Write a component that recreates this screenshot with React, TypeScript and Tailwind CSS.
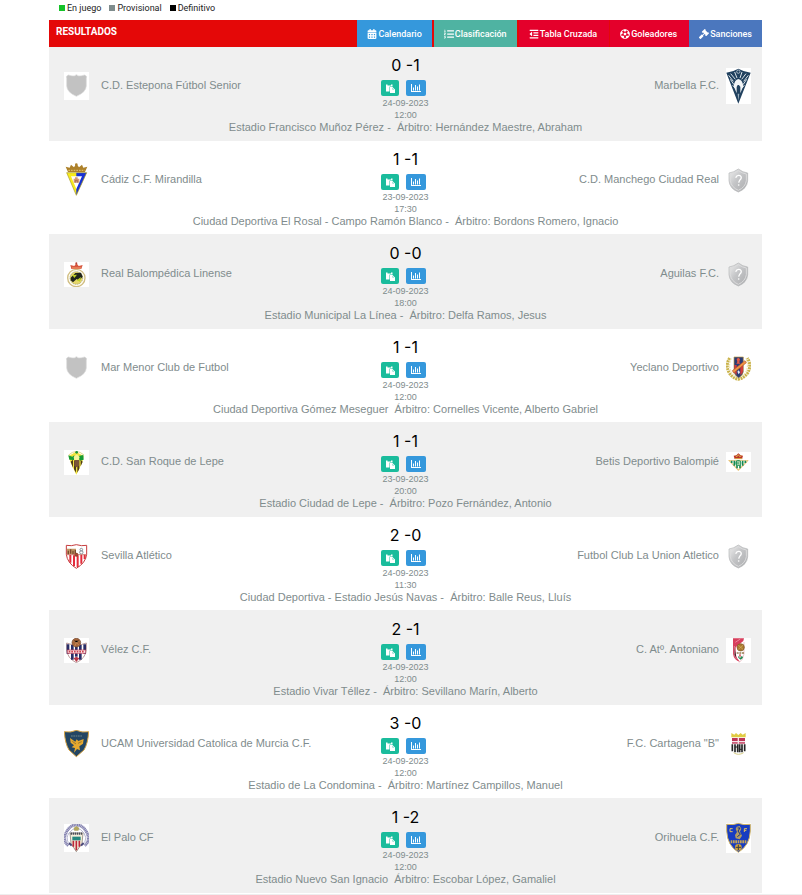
import type { ReactNode } from "react";
import { FaCalendarAlt, FaListOl, FaOutdent, FaFutbol, FaGavel } from "react-icons/fa";

/* Every crest is drawn on a 75-unit wide canvas and shown 25px wide. */
function Crest({ h, boxed, children }: { h: number; boxed?: boolean; children: ReactNode }) {
  return (
    <svg viewBox={`0 0 75 ${h}`} className={boxed ? "w-[25px] bg-white" : "w-[25px]"} aria-hidden="true">
      {children}
    </svg>
  );
}

const greyShield = "M37 8 Q43 14 53 11 L62 9 Q71 13 67 18 V42 Q66 61 37 73 Q9 61 8 42 V18 Q4 13 13 9 L22 11 Q32 14 37 8Z";

function PlainShield({ boxed }: { boxed?: boolean }) {
  return (
    <Crest h={84} boxed={boxed}>
      <path d={greyShield} fill="#c2c2c2" stroke="#dcdcdc" strokeWidth="2" />
    </Crest>
  );
}

function UnknownShield() {
  return (
    <Crest h={75}>
      <defs>
        <linearGradient id="silver" x1="0" y1="0" x2="1" y2="1">
          <stop offset="0" stopColor="#f0f0f0" />
          <stop offset=".45" stopColor="#c4c5c7" />
          <stop offset="1" stopColor="#aaabad" />
        </linearGradient>
      </defs>
      <path d="M37 3 Q50 13 65 15 V38 Q63 62 37 72 Q11 62 9 38 V15 Q24 13 37 3Z" fill="url(#silver)" stroke="#b4b5b7" strokeWidth="2" />
      <path d="M37 8 Q49 16 61 18 V38 Q58 58 37 67 Q16 58 13 38 V18 Q26 16 37 8Z" fill="none" stroke="#dcdcdd" strokeWidth="3" />
      <path d="M29 29 Q32 21 39 22 Q48 24 45 32 Q39 37 38 44" fill="none" stroke="#fff" strokeWidth="4" />
      <circle cx="38" cy="51" r="2.5" fill="#fff" />
    </Crest>
  );
}

function Marbella() {
  return (
    <Crest h={108} boxed>
      <path d="M1 14 Q20 12 37 2 Q55 12 74 14 L37 107Z" fill="#21415f" />
      <path d="M8 22 L22 40 M14 17 L28 34 M26 12 L33 30 M48 12 L42 30 M60 17 L47 34 M67 22 L53 40 M13 34 L24 50 M62 34 L51 50 M20 52 L29 62 M55 52 L46 62" stroke="#dbe4ea" strokeWidth="3" />
      <path d="M23 54 Q26 35 37 33 Q49 35 52 54 L43 76 V56 Q37 47 32 56 V76Z" fill="#f2f5f7" />
      <path d="M35 77 H40 L37 98Z" fill="#9bb0bf" />
      <circle cx="37" cy="11" r="5" fill="none" stroke="#dbe4ea" strokeWidth="2" />
      <path d="M37 51 V68" stroke="#21415f" strokeWidth="5" />
    </Crest>
  );
}

function Cadiz() {
  return (
    <Crest h={100}>
      <path d="M8 29 H68 L37 97Z" fill="#f8ec1c" />
      <path d="M37 29 H68 L37 97Z" fill="#1732d6" />
      <path d="M21 40 H54 L37 78Z" fill="#fff" />
      <path d="M29 59 V47 H33 V43 H41 V47 H46 V59Z" fill="#d59a73" />
      <path d="M34 59 V52 H40 V59" stroke="#8f5f48" strokeWidth="2" fill="none" />
      <path d="M8 29 H68 L37 97Z" fill="none" stroke="#a89832" strokeWidth="2" />
      <path d="M12 27 L5 11 L17 14 L21 5 L30 13 L37 2 L45 13 L54 5 L58 14 L70 11 L63 27Z" fill="#ad812a" />
      <path d="M13 22 H62" stroke="#e5ca70" strokeWidth="3" strokeDasharray="5 3" />
      <circle cx="37" cy="5" r="4" fill="#ad812a" />
    </Crest>
  );
}

function Linense() {
  return (
    <Crest h={75} boxed>
      <circle cx="37" cy="48" r="26" fill="#fffdf2" stroke="#d0bd82" strokeWidth="4" />
      <circle cx="37" cy="48" r="19" fill="#e6d76b" stroke="#8d8b67" strokeWidth="2" strokeDasharray="4 2" />
      <path d="M20 47 L34 33 L51 32 L56 44 L45 56 L38 51 L27 61 L20 55Z" fill="#20241c" />
      <path d="M25 39 L39 38 L31 48 M38 55 L51 45 L48 59" fill="#bdd023" />
      <path d="M22 21 L19 9 L31 12 L37 3 L44 12 L56 9 L52 21Z" fill="#d7573f" />
      <path d="M24 18 H51" stroke="#f3a06c" strokeWidth="3" />
      <circle cx="37" cy="4" r="3" fill="#b54437" />
    </Crest>
  );
}

function Yeclano() {
  return (
    <Crest h={75}>
      <path d="M11 6 Q-3 28 10 51 Q19 66 36 70 Q55 66 65 51 Q78 28 64 6" fill="none" stroke="#cab34b" strokeWidth="9" strokeDasharray="6 2" />
      <path d="M16 8 Q5 29 17 50 Q25 61 36 64 Q50 61 58 50 Q70 29 59 8" fill="none" stroke="#edde94" strokeWidth="3" strokeDasharray="5 3" />
      <path d="M24 3 H52 V47 Q51 57 38 66 Q25 57 24 47Z" fill="#2a3b76" stroke="#bd9a47" strokeWidth="2" />
      <path d="M25 27 H32 V57 Q26 52 25 46 M43 27 H51 V46 Q50 53 43 58Z" fill="#d53b39" />
      <path d="M32 9 L37 5 L42 9 L40 19 L43 23 H31 L34 18Z" fill="#e25945" />
      <path d="M19 44 L57 14 L61 20 L23 51Z" fill="#f19442" stroke="#ad5430" strokeWidth="2" />
      <path d="M34 47 L38 43 L42 49 L38 55Z" fill="#e6e9f0" />
    </Crest>
  );
}

function SanRoque() {
  return (
    <Crest h={75} boxed>
      <path d="M14 18 L36 5 L59 18 L55 37 L37 74 L20 38Z" fill="#f2e43e" />
      <path d="M14 15 Q36 -6 60 15" fill="none" stroke="#e8d98d" strokeWidth="3" />
      <path d="M13 16 L25 20 L31 16 L30 30 L16 29Z M43 18 L58 15 L59 29 L47 32Z" fill="#169b36" />
      <circle cx="38" cy="7" r="4" fill="#1a913a" />
      <path d="M20 35 L27 29 V53Z M30 32 H36 V68 L30 58Z M40 32 H46 V56 L40 68Z M50 30 L56 35 L50 49Z" fill="#4c3b1a" />
      <path d="M31 30 H45 V48 L38 52 L31 48Z" fill="#795538" />
      <path d="M29 21 L38 13 L47 21 L44 30 H31Z" fill="#f7f59b" />
    </Crest>
  );
}

function Betis() {
  return (
    <Crest h={60} boxed>
      <path d="M6 24 H68 L63 31 L37 57 L12 31Z" fill="#e9c47a" />
      <path d="M12 26 H63 L37 52Z" fill="#fff" />
      <path d="M17 26 V33 M25 26 V41 M50 26 V41 M58 26 V33 M33 39 V49 M42 39 V49" stroke="#178a52" strokeWidth="5" />
      <circle cx="37" cy="33" r="9" fill="#2d965d" />
      <path d="M33 29 H41 V38 H33 M33 33 H41" fill="none" stroke="#e8f2d2" strokeWidth="2" />
      <path d="M26 21 L23 11 L31 10 L37 4 L44 10 L51 11 L48 21Z" fill="#bd3028" />
      <path d="M26 20 H49 M28 11 L33 14 L37 8 L41 14 L47 11" fill="none" stroke="#d9b34e" strokeWidth="3" />
    </Crest>
  );
}

function Sevilla() {
  return (
    <Crest h={75}>
      <path d="M7 4 Q22 7 37 2 Q53 7 68 4 V31 Q65 57 37 73 Q10 57 7 31Z" fill="#fff" />
      <path d="M19 33 V56 M30 34 V66 M41 34 V69 M52 33 V59 M62 32 V45" stroke="#e42c3c" strokeWidth="6" />
      <path d="M9 14 H36 V31 H8Z" fill="#c19865" />
      <path d="M13 31 V20 M20 29 V16 M27 31 V20 M34 29 V18" stroke="#794931" strokeWidth="4" />
      <circle cx="52" cy="17" r="4" fill="none" stroke="#88919a" strokeWidth="3" />
      <circle cx="52" cy="25" r="5" fill="none" stroke="#88919a" strokeWidth="3" />
      <circle cx="37" cy="32" r="6" fill="#91452f" />
      <path d="M8 32 H67" stroke="#b94b3e" strokeWidth="2" />
      <path d="M7 4 Q22 7 37 2 Q53 7 68 4 V31 Q65 57 37 73 Q10 57 7 31Z" fill="none" stroke="#c63c3e" strokeWidth="3" />
    </Crest>
  );
}

function Velez() {
  return (
    <Crest h={75} boxed>
      <path d="M8 15 L24 20 H51 L67 15 V35 Q65 61 37 74 Q10 61 8 35Z" fill="#fff" stroke="#98696b" strokeWidth="2" />
      <path d="M12 19 V48 M25 21 V65 M49 21 V65 M62 19 V48" stroke="#292d67" strokeWidth="8" />
      <path d="M37 23 V56" stroke="#292d67" strokeWidth="8" />
      <path d="M10 36 H65 V46 H10Z" fill="#f7e8e8" stroke="#cf4053" strokeWidth="2" />
      <path d="M14 41 H61" stroke="#cf4053" strokeWidth="5" strokeDasharray="5 3" />
      <circle cx="37" cy="14" r="13" fill="#a7663b" stroke="#70452f" strokeWidth="2" />
      <path d="M27 8 L37 14 L48 8 M37 14 L32 25 M37 14 L46 22" stroke="#d59561" strokeWidth="2" />
      <path d="M29 61 L37 56 L46 61 L37 72Z" fill="#b93849" />
    </Crest>
  );
}

function Antoniano() {
  return (
    <Crest h={75} boxed>
      <path d="M21 1 H54 L52 9 L29 28 V49 Q31 61 42 72 Q24 67 21 48Z" fill="#d73f5c" />
      <path d="M28 13 L43 3 M25 24 L25 50 L31 63" stroke="#f3a8b6" strokeWidth="2" />
      <path d="M54 12 V48 Q52 66 39 74" fill="none" stroke="#dfaab4" strokeWidth="2" />
      <circle cx="44" cy="28" r="11" fill="#a97932" stroke="#805722" strokeWidth="2" />
      <path d="M37 22 L51 34 M51 22 L37 34" stroke="#d7b35c" strokeWidth="2" />
      <path d="M32 45 H55" stroke="#94794f" strokeWidth="5" strokeDasharray="6 2" />
      <path d="M36 53 L42 60 L48 53 L51 59 L44 65 L37 59Z" fill="#238852" />
      <path d="M42 49 V56" stroke="#c8353d" strokeWidth="4" />
    </Crest>
  );
}

function Ucam() {
  return (
    <Crest h={82}>
      <path d="M1 5 Q20 9 37 1 Q55 9 74 5 Q72 40 60 60 L37 80 L15 60 Q3 40 1 5Z" fill="#244663" stroke="#d6a344" strokeWidth="3" />
      <path d="M18 24 L34 35 L38 28 L43 33 L59 27 L57 41 L46 49 L48 61 L39 57 L30 68 L33 54 L23 52 L30 46 L20 38Z" fill="#e6a92f" />
      <path d="M21 18 H54" stroke="#56707c" strokeWidth="4" strokeDasharray="5 2" />
      <path d="M42 40 L53 35 M25 34 L36 42" stroke="#735f30" strokeWidth="2" />
    </Crest>
  );
}

function Cartagena() {
  return (
    <Crest h={75}>
      <path d="M16 16 V3 L25 8 L30 3 L37 9 L44 3 L50 8 L59 3 V16Z" fill="#e0cb43" />
      <path d="M18 18 H57 V35 H18Z" fill="#bd3557" />
      <path d="M37 18 V35 M18 29 H57" stroke="#f4e4e8" strokeWidth="4" />
      <path d="M17 37 H58 V54 L51 61 H24 L17 54Z" fill="#fff" />
      <path d="M19 37 V58 M27 37 V61 M35 37 V61 M41 37 V61 M48 37 V61 M56 37 V58" stroke="#252525" strokeWidth="5" />
      <path d="M27 45 H35 M41 52 H48" stroke="#252525" strokeWidth="3" />
      <path d="M23 62 Q37 72 53 62" fill="none" stroke="#d9cf87" strokeWidth="3" />
    </Crest>
  );
}

function ElPalo() {
  return (
    <Crest h={84} boxed>
      <path d="M13 65 Q-6 49 7 25 Q18 3 37 3 Q57 3 68 25 Q81 49 62 65" fill="none" stroke="#8583b0" strokeWidth="9" strokeDasharray="4 1" />
      <path d="M13 56 Q5 41 15 27 Q26 13 37 13 Q50 13 60 27 Q70 41 62 56" fill="none" stroke="#b6b6d0" strokeWidth="3" />
      <path d="M18 27 H57 L54 58 L37 83 L21 58Z" fill="#f4eedb" stroke="#746d60" strokeWidth="2" />
      <path d="M20 29 H55" stroke="#4a4b58" strokeWidth="7" strokeDasharray="4 2" />
      <path d="M25 38 H50 V49 H25Z" fill="#24877f" />
      <path d="M28 50 V68 M37 50 V79 M46 50 V68" stroke="#bd2739" strokeWidth="5" />
      <path d="M29 12 L37 6 L46 12 L43 20 H31Z" fill="#b2a760" />
      <path d="M15 57 L23 65 M59 57 L51 65" stroke="#4b497b" strokeWidth="6" />
    </Crest>
  );
}

function Orihuela() {
  return (
    <Crest h={90} boxed>
      <path d="M2 4 Q22 7 37 1 Q53 7 73 4 V24 Q71 68 37 88 Q4 68 2 24Z" fill="#173cc1" stroke="#d1b464" strokeWidth="3" />
      <path d="M20 17 H12 V26 H20 M55 27 V17 H63 M55 22 H61" fill="none" stroke="#e1bf62" strokeWidth="3" />
      <path d="M32 11 L41 9 L46 17 L42 26 L48 38 L41 49 L29 46 L27 36 L33 27 L29 18Z" fill="#b29c64" />
      <path d="M35 15 H42 L36 24 L43 34 L34 41" fill="none" stroke="#173081" strokeWidth="3" />
      <path d="M14 56 H61" stroke="#c6a557" strokeWidth="9" strokeDasharray="5 2" />
      <circle cx="37" cy="73" r="10" fill="#d0a33e" />
      <path d="M37 65 V81 M29 73 H45" stroke="#373b45" strokeWidth="3" />
    </Crest>
  );
}

/* Clipboard with a sheet laid over its lower right corner. */
function PasteIcon() {
  return (
    <svg viewBox="0 0 18 18" className="size-[9px]" fill="currentColor" aria-hidden="true">
      <path d="M0 1 H3 V3 H10 V1 H13 V5 H7 V15 H0Z" />
      <path fillRule="evenodd" d="M8 6 H13 L18 11 V18 H8Z M13 8 V11 H16Z" />
    </svg>
  );
}

/* Four bars standing in an L-shaped axis. */
function BarsIcon() {
  return (
    <svg viewBox="0 0 20 16" className="h-2 w-2.5" fill="currentColor" aria-hidden="true">
      <path d="M0 0 H2 V14 H20 V16 H0Z" />
      <path d="M4 7 H6 V13 H4Z M8 2 H10 V13 H8Z M12 5 H14 V13 H12Z M16 1 H18 V13 H16Z" />
    </svg>
  );
}

type Match = {
  home: string;
  homeCrest: ReactNode;
  away: string;
  awayCrest: ReactNode;
  score: [number, number];
  date: string;
  time: string;
  venue: string;
};

const matches: Match[] = [
  { home: "C.D. Estepona Fútbol Senior", homeCrest: <PlainShield boxed />, away: "Marbella F.C.", awayCrest: <Marbella />, score: [0, 1], date: "24-09-2023", time: "12:00", venue: "Estadio Francisco Muñoz Pérez - \u00a0Árbitro: Hernández Maestre, Abraham" },
  { home: "Cádiz C.F. Mirandilla", homeCrest: <Cadiz />, away: "C.D. Manchego Ciudad Real", awayCrest: <UnknownShield />, score: [1, 1], date: "23-09-2023", time: "17:30", venue: "Ciudad Deportiva El Rosal - Campo Ramón Blanco - \u00a0Árbitro: Bordons Romero, Ignacio" },
  { home: "Real Balompédica Linense", homeCrest: <Linense />, away: "Aguilas F.C.", awayCrest: <UnknownShield />, score: [0, 0], date: "24-09-2023", time: "18:00", venue: "Estadio Municipal La Línea - \u00a0Árbitro: Delfa Ramos, Jesus" },
  { home: "Mar Menor Club de Futbol", homeCrest: <PlainShield />, away: "Yeclano Deportivo", awayCrest: <Yeclano />, score: [1, 1], date: "24-09-2023", time: "12:00", venue: "Ciudad Deportiva Gómez Meseguer \u00a0Árbitro: Cornelles Vicente, Alberto Gabriel" },
  { home: "C.D. San Roque de Lepe", homeCrest: <SanRoque />, away: "Betis Deportivo Balompié", awayCrest: <Betis />, score: [1, 1], date: "23-09-2023", time: "20:00", venue: "Estadio Ciudad de Lepe - \u00a0Árbitro: Pozo Fernández, Antonio" },
  { home: "Sevilla Atlético", homeCrest: <Sevilla />, away: "Futbol Club La Union Atletico", awayCrest: <UnknownShield />, score: [2, 0], date: "24-09-2023", time: "11:30", venue: "Ciudad Deportiva - Estadio Jesús Navas - \u00a0Árbitro: Balle Reus, Lluís" },
  { home: "Vélez C.F.", homeCrest: <Velez />, away: "C. Atº. Antoniano", awayCrest: <Antoniano />, score: [2, 1], date: "24-09-2023", time: "12:00", venue: "Estadio Vivar Téllez - \u00a0Árbitro: Sevillano Marín, Alberto" },
  { home: "UCAM Universidad Catolica de Murcia C.F.", homeCrest: <Ucam />, away: "F.C. Cartagena \"B\"", awayCrest: <Cartagena />, score: [3, 0], date: "24-09-2023", time: "12:00", venue: "Estadio de La Condomina - \u00a0Árbitro: Martínez Campillos, Manuel" },
  { home: "El Palo CF", homeCrest: <ElPalo />, away: "Orihuela C.F.", awayCrest: <Orihuela />, score: [1, 2], date: "24-09-2023", time: "12:00", venue: "Estadio Nuevo San Ignacio \u00a0Árbitro: Escobar López, Gamaliel" },
];

const legend = [
  { label: "En juego", swatch: "bg-[#15c229]" },
  { label: "Provisional", swatch: "bg-[#7f8c8d]" },
  { label: "Definitivo", swatch: "bg-black" },
];

const tabs = [
  { label: "Calendario", Icon: FaCalendarAlt, style: "bg-[#3598dc] pr-2.5 mr-0.5" },
  { label: "Clasificación", Icon: FaListOl, style: "bg-[#4fb3a2] pr-2.5" },
  { label: "Tabla Cruzada", Icon: FaOutdent, style: "bg-[#e4002b] pr-3 ml-0.5 mr-px" },
  { label: "Goleadores", Icon: FaFutbol, style: "bg-[#e4002b] pr-3" },
  { label: "Sanciones", Icon: FaGavel, style: "bg-[#4b77be] pr-2.5" },
];

function MatchRow({ match }: { match: Match }) {
  return (
    <li className="border-b border-[#f0f0f0] py-1.5 odd:bg-[#f0f0f0]">
      <div className="grid grid-cols-[1fr_60px_1fr] px-[11px]">
        <div className="flex items-center gap-3 pb-0.5 pl-1 text-[11px] leading-3">
          {match.homeCrest}
          <span className="-mt-0.5">{match.home}</span>
        </div>
        <div className="flex flex-col items-center">
          <p className="font-[Inter,sans-serif] text-base leading-6 text-black">
            {match.score[0]} -{match.score[1]}
          </p>
          <div className="mt-[3px] flex gap-[7px] pr-1 text-white">
            <button type="button" aria-label="Acta" className="flex h-4 w-[18px] items-center justify-center rounded-xs bg-[#1abc9c]">
              <PasteIcon />
            </button>
            <button type="button" aria-label="Estadísticas" className="flex h-4 w-5 items-center justify-center rounded-xs bg-[#3598dc]">
              <BarsIcon />
            </button>
          </div>
          <p className="mt-px text-center text-[9px] leading-3">
            <time className="block">{match.date}</time>
            <time className="block">{match.time}</time>
          </p>
        </div>
        <div className="flex items-center justify-end gap-[7px] pb-0.5 text-[11px] leading-3">
          <span className="-mt-0.5">{match.away}</span>
          {match.awayCrest}
        </div>
      </div>
      <p className="text-center text-[11px] leading-[13px]">{match.venue}</p>
    </li>
  );
}

export default function App() {
  return (
    <div className="bg-white font-['Liberation_Sans',Arial,sans-serif] text-[#7f8c8d]">
      <main className="mr-10 ml-[49px]">
        <ul className="flex h-5 gap-2 pt-0.5 pl-2.5 font-[Roboto,sans-serif] text-[9px] leading-3 text-[#222]">
          {legend.map(({ label, swatch }) => (
            <li key={label} className="flex h-3 items-center gap-0.5">
              <span className={`size-1.5 ${swatch}`} />
              {label}
            </li>
          ))}
        </ul>
        <header className="flex h-[27px] items-stretch justify-between bg-[#e40808] font-[Roboto,sans-serif] text-white">
          <h1 className="pt-1.5 pl-[7px] text-[10px] leading-3 font-bold">RESULTADOS</h1>
          <nav className="flex text-[9px] leading-3 font-medium">
            {tabs.map(({ label, Icon, style }) => (
              <a key={label} href="#" className={`flex items-center gap-px pl-2.5 ${style}`}>
                <Icon className="size-2.5" />
                {label}
              </a>
            ))}
          </nav>
        </header>
        <ul>
          {matches.map((match) => (
            <MatchRow key={match.home} match={match} />
          ))}
        </ul>
      </main>
      <div className="mt-px h-px bg-[#eee]" />
    </div>
  );
}
